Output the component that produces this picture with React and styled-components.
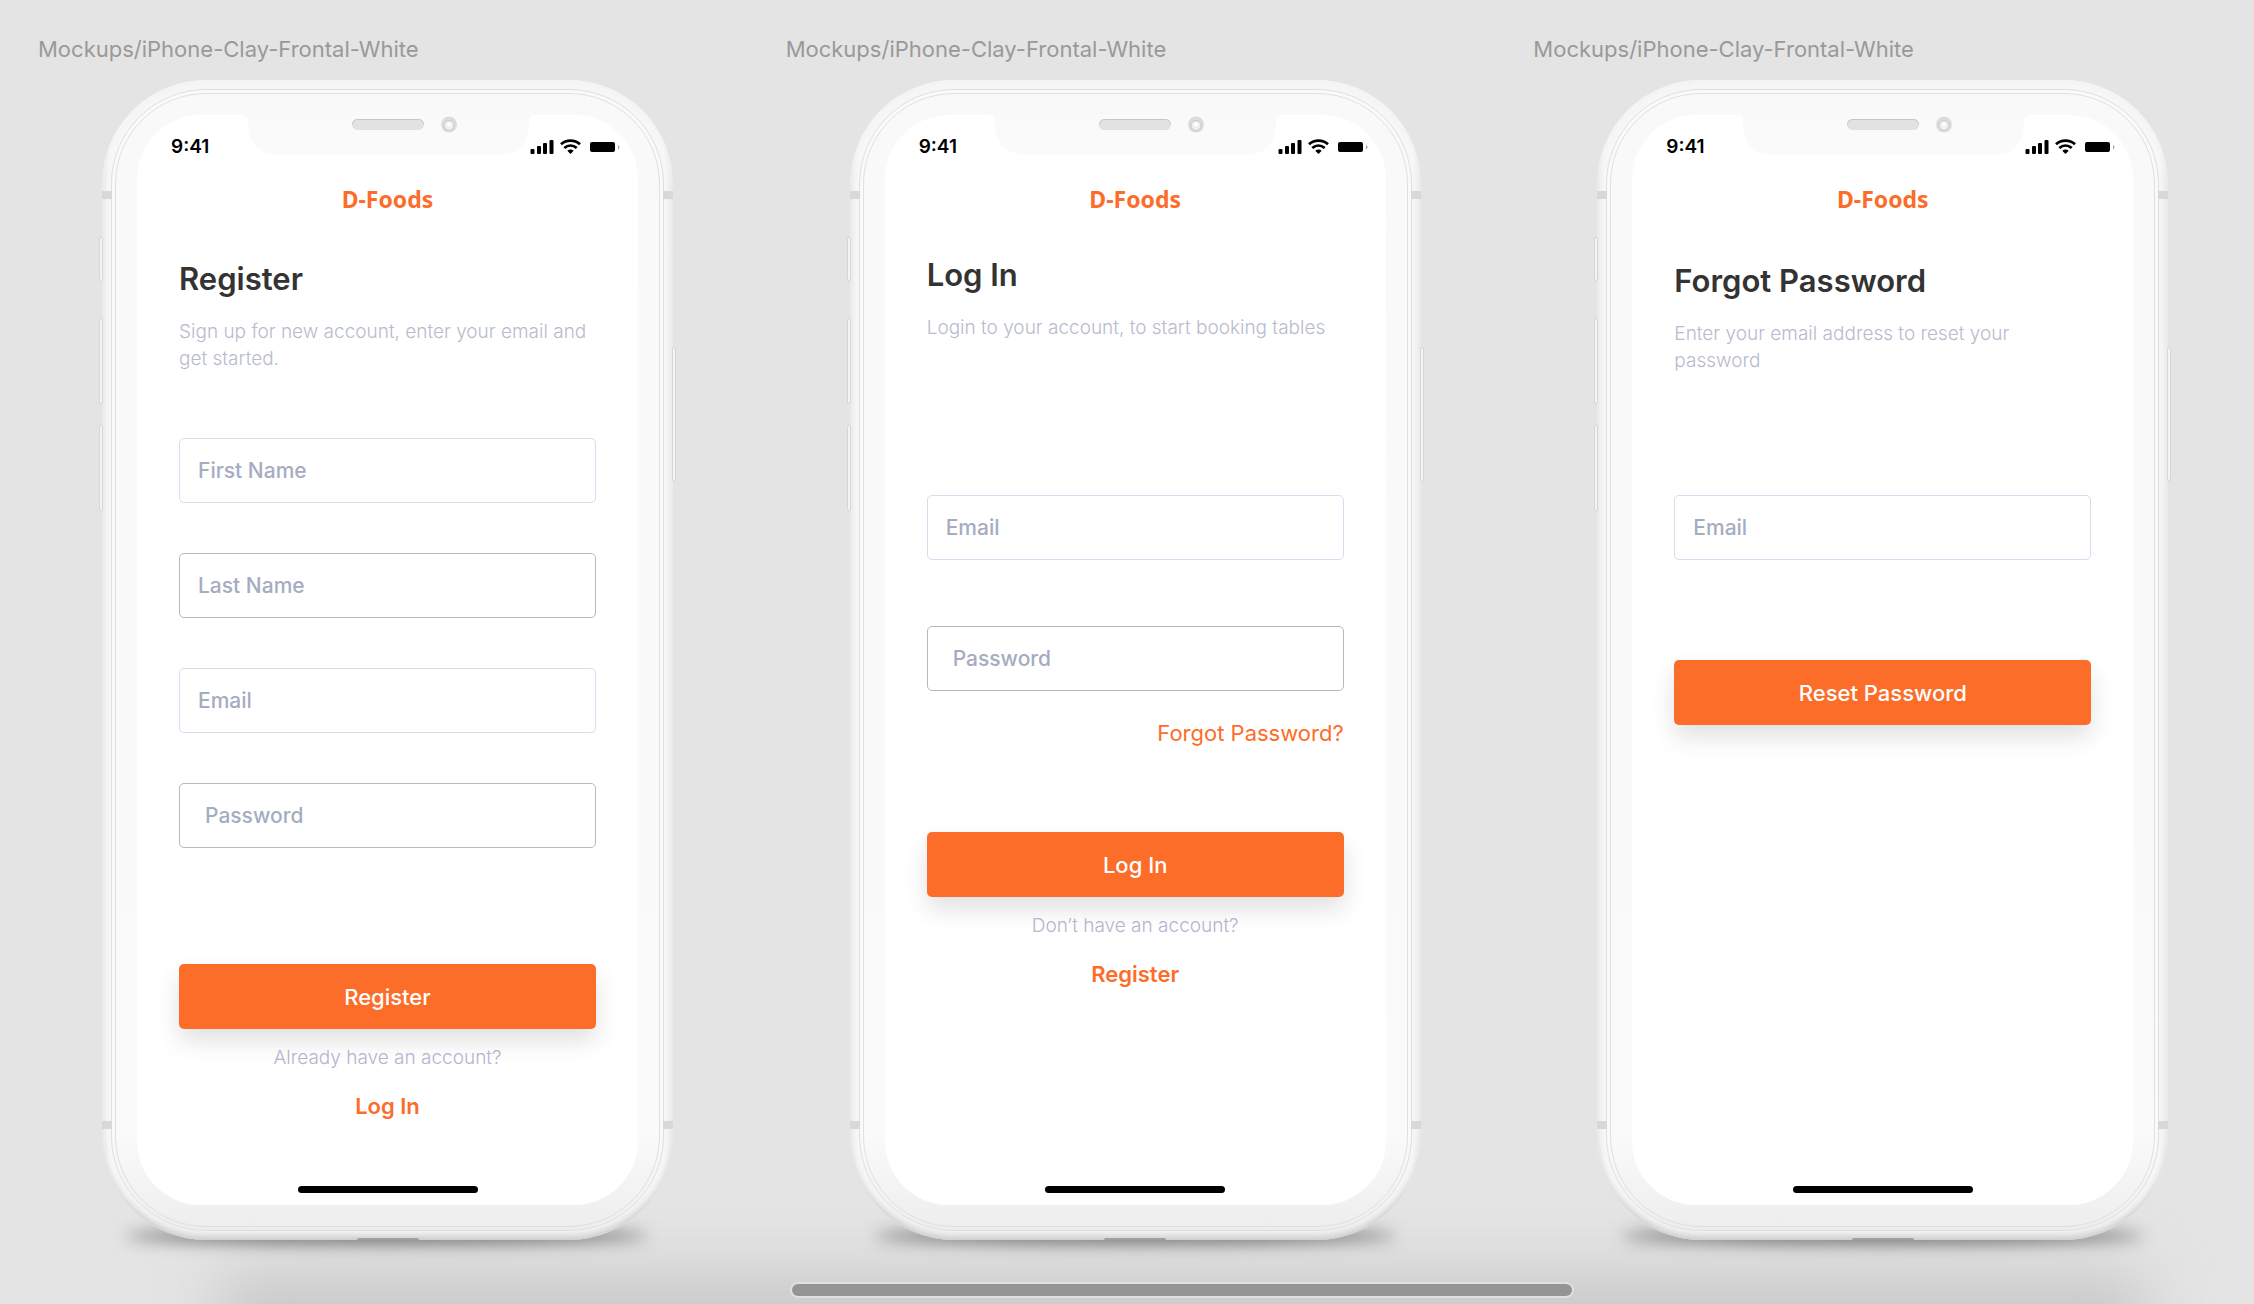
import React from 'react';
import styled, { createGlobalStyle } from 'styled-components';

const GlobalStyle = createGlobalStyle`
  :root {
    --color-orange: #fc6d2a;
    --color-canvas: #e4e4e4;
    --color-heading: #333333;
    --color-muted: #b8bbcc;
    --color-placeholder: #a6acc0;
  }

  * {
    box-sizing: border-box;
    margin: 0;
    padding: 0;
  }

  body {
    background-color: var(--color-canvas);
    font-family: Inter, 'Liberation Sans', sans-serif;
  }
`;

const Canvas = styled.main`
  position: relative;
  min-height: 100vh;
  padding: 34px 5px 0 6px;
  display: grid;
  grid-template-columns: repeat(3, 1fr);
  align-items: start;
  overflow: hidden;
`;

const FloorShadow = styled.div`
  position: absolute;
  left: 220px;
  right: 110px;
  bottom: -60px;
  height: 90px;
  background-color: #c8c8c8;
  filter: blur(30px);
`;

const Artboard = styled.section`
  position: relative;
  padding-left: 32px;
`;

const ArtboardName = styled.h2`
  font-size: 22px;
  line-height: 30px;
  font-weight: 400;
  color: #999999;
`;

const Phone = styled.div`
  position: relative;
  width: 100%;
  max-width: 571px;
  min-height: 1160px;
  margin: 16px 0 0 64px;
  padding: 9px;
  display: flex;
  border-radius: 104px;
  background: linear-gradient(to right, #ededed, #f7f7f7 8px, #f7f7f7 562px, #ededed);
  box-shadow: inset 0 -8px 8px -4px #c8c8c8, inset 0 4px 6px #f3f3f3;
`;

const ContactShadow = styled.div`
  position: absolute;
  left: 120px;
  bottom: -4px;
  width: 522px;
  height: 16px;
  border-radius: 50%;
  background-color: #6e6e6e;
  filter: blur(8px);
`;

const Rim = styled.div`
  flex: 1;
  padding: 3px;
  display: flex;
  border: 1px solid #dfdfdf;
  border-radius: 95px;
  background: linear-gradient(to bottom, #fafafa 92%, #ededed 100%);
`;

const Bezel = styled.div`
  flex: 1;
  padding: 21px;
  display: flex;
  border: 1px solid #e0e0e0;
  border-radius: 91px;
  background: linear-gradient(to bottom, #f9f9f9 0, #fafafa 92%, #eeeeee 100%);
`;

const Screen = styled.div`
  position: relative;
  flex: 1;
  padding-bottom: 12px;
  display: flex;
  flex-direction: column;
  border-radius: 64px;
  background-color: #ffffff;
`;

const Band = styled.span`
  position: absolute;
  ${({ $side }) => $side}: 0;
  ${({ $edge }) => $edge}: 111px;
  width: 10px;
  height: 8px;
  background-color: #d8d8d8;
`;

const SideButton = styled.span`
  position: absolute;
  ${({ $side }) => $side}: -3px;
  top: ${({ $top }) => $top}px;
  width: 4px;
  height: ${({ $height }) => $height}px;
  border: 1px solid #d6d6d6;
  border-radius: 3px;
  background-color: #f4f4f4;
`;

const Port = styled.span`
  position: absolute;
  left: 50%;
  bottom: 0;
  width: 62px;
  height: 2px;
  margin-left: -31px;
  border-radius: 31px 31px 0 0;
  background-color: #a0a0a0;
`;

const NotchSvg = styled.svg`
  position: absolute;
  top: 0;
  left: 50%;
  margin-left: -146px;
`;

const StatusBar = styled.div`
  padding: 21px 18px 0 34px;
  display: flex;
  justify-content: space-between;
  align-items: center;
`;

const Time = styled.time`
  font-size: 19px;
  line-height: 22px;
  font-weight: 600;
  color: #000000;
`;

const Body = styled.div`
  padding: 26px 42px 0;
  display: flex;
  flex-direction: column;
`;

const Brand = styled.p`
  font-family: 'Noto Sans', sans-serif;
  font-size: 23px;
  line-height: 30px;
  font-weight: 700;
  text-align: center;
  color: var(--color-orange);
`;

const Heading = styled.h1`
  margin-top: ${({ $top }) => $top}px;
  font-size: 31px;
  line-height: 40px;
  font-weight: 600;
  color: var(--color-heading);
`;

const Lead = styled.p`
  margin-top: 19px;
  font-size: 19px;
  line-height: 27px;
  font-weight: 300;
  color: var(--color-muted);
`;

const Form = styled.form`
  margin-top: ${({ $top }) => $top}px;
  display: flex;
  flex-direction: column;
`;

const Fields = styled.div`
  display: flex;
  flex-direction: column;
  gap: ${({ $gap }) => $gap}px;
`;

const Input = styled.input`
  width: 100%;
  height: 65px;
  padding: 0 ${({ $inset }) => ($inset ? 25 : 18)}px;
  border: 1px solid ${({ $outlined }) => ($outlined ? '#b8b8b8' : '#dcdaee')};
  border-radius: 5px;
  background-color: #ffffff;
  font-family: inherit;
  font-size: 21px;
  font-weight: 500;
  color: var(--color-heading);
  outline: none;

  &::placeholder {
    color: var(--color-placeholder);
    opacity: 1;
  }

  &:focus {
    border-color: var(--color-orange);
  }
`;

const ForgotLink = styled.a`
  align-self: flex-end;
  margin-top: 28px;
  font-size: 22px;
  line-height: 28px;
  font-weight: 400;
  color: var(--color-orange);
  text-decoration: none;
`;

const Submit = styled.button`
  height: 65px;
  margin-top: ${({ $top }) => $top}px;
  border: none;
  border-radius: 5px;
  background-color: var(--color-orange);
  box-shadow: 0 12px 24px rgba(0, 0, 0, 0.12);
  font-family: inherit;
  font-size: 22px;
  font-weight: 500;
  color: #ffffff;
  cursor: pointer;
`;

const Prompt = styled.p`
  position: relative;
  margin-top: 15px;
  font-size: 19px;
  line-height: 27px;
  font-weight: 300;
  text-align: center;
  color: #b5b4cd;
`;

const SwitchLink = styled.a`
  align-self: center;
  margin-top: 21px;
  font-size: 22px;
  line-height: 28px;
  font-weight: 600;
  color: var(--color-orange);
  text-decoration: none;
`;

const HomeIndicator = styled.div`
  align-self: center;
  width: 180px;
  height: 7px;
  margin-top: auto;
  border-radius: 4px;
  background-color: #000000;
`;

const ScrollThumb = styled.div`
  position: absolute;
  left: 35%;
  right: 30%;
  bottom: 8px;
  height: 12px;
  margin: 0 6px 0 3px;
  border-radius: 6px;
  background-color: #949494;
  box-shadow: 0 0 0 2px #e0e0e0;
`;

const Notch = () => (
  <NotchSvg width="293" height="40" viewBox="0 0 293 40" aria-hidden="true">
    <path
      d="M0 0C4 0 6 2 6 7C6 28 16 39 34 39H259C277 39 287 28 287 7C287 2 289 0 293 0Z"
      fill="#fafafa"
    />
    <rect x="110" y="4" width="72" height="11" rx="5.500" fill="#e2e2e2" />
    <path d="M110.500 9.500C110.500 6.500 112.500 4.500 115.500 4.500H176.500C179.500 4.500 181.500 6.500 181.500 9.500" fill="none" stroke="#c6c6c6" />
    <circle cx="207" cy="9.500" r="8" fill="#dcdcdc" />
    <circle cx="207" cy="10.500" r="5" fill="#efefef" stroke="#c8c8c8" />
    <circle cx="207" cy="9.500" r="2" fill="#ffffff" />
  </NotchSvg>
);

const StatusIcons = () => (
  <svg width="90" height="16" viewBox="0 0 90 16" aria-hidden="true">
    <rect x="0.500" y="10" width="4" height="5" rx="1" />
    <rect x="7" y="7" width="4" height="8" rx="1" />
    <rect x="13" y="4" width="4" height="11" rx="1" />
    <rect x="19.500" y="1" width="4" height="14" rx="1" />
    <g fill="none" stroke="#000" strokeWidth="2.800">
      <path d="M31 5.300C36.500 0.500 44.500 0.500 50 5.300" />
      <path d="M34.300 9C38 5.800 43 5.800 46.700 9" />
    </g>
    <path d="M37.300 11.800C39.200 10.200 41.800 10.200 43.700 11.800L40.500 15Z" />
    <rect x="60" y="3" width="25" height="10" rx="2" />
    <path d="M88 6C90 7 90 9.500 88 10.500Z" fill="#a0a0a0" />
  </svg>
);

const screens = [
  {
    id: 'register',
    title: 'Register',
    lead: 'Sign up for new account, enter your email and get started.',
    headingTop: 45,
    formTop: 66,
    fieldGap: 50,
    submitTop: 116,
    fields: [
      { label: 'First Name', type: 'text' },
      { label: 'Last Name', type: 'text', outlined: true },
      { label: 'Email', type: 'email' },
      { label: 'Password', type: 'password', outlined: true, inset: true },
    ],
    submit: 'Register',
    prompt: 'Already have an account?',
    link: 'Log In',
  },
  {
    id: 'login',
    title: 'Log In',
    lead: 'Login to your account, to start booking tables',
    headingTop: 41,
    formTop: 154,
    fieldGap: 66,
    submitTop: 85,
    fields: [
      { label: 'Email', type: 'email' },
      { label: 'Password', type: 'password', outlined: true, inset: true },
    ],
    forgot: 'Forgot Password?',
    submit: 'Log In',
    prompt: 'Don’t have an account?',
    link: 'Register',
  },
  {
    id: 'forgot',
    title: 'Forgot Password',
    lead: 'Enter your email address to reset your password',
    headingTop: 47,
    formTop: 121,
    fieldGap: 50,
    submitTop: 100,
    fields: [{ label: 'Email', type: 'email' }],
    submit: 'Reset Password',
  },
];

const PhoneMockup = ({ screen }) => (
  <Artboard>
    <ArtboardName>Mockups/iPhone-Clay-Frontal-White</ArtboardName>
    <ContactShadow />
    <Phone>
      <SideButton $side="left" $top={157} $height={44} />
      <SideButton $side="left" $top={238} $height={86} />
      <SideButton $side="left" $top={345} $height={86} />
      <SideButton $side="right" $top={267} $height={134} />
      <Band $side="left" $edge="top" />
      <Band $side="right" $edge="top" />
      <Band $side="left" $edge="bottom" />
      <Band $side="right" $edge="bottom" />
      <Port />
      <Rim>
        <Bezel>
          <Screen>
            <Notch />
            <StatusBar>
              <Time>9:41</Time>
              <StatusIcons />
            </StatusBar>
            <Body>
              <Brand>D-Foods</Brand>
              <Heading $top={screen.headingTop}>{screen.title}</Heading>
              <Lead>{screen.lead}</Lead>
              <Form $top={screen.formTop} onSubmit={(e) => e.preventDefault()}>
                <Fields $gap={screen.fieldGap}>
                  {screen.fields.map(({ label, type, outlined, inset }) => (
                    <Input
                      key={label}
                      type={type}
                      placeholder={label}
                      aria-label={label}
                      $outlined={outlined}
                      $inset={inset}
                    />
                  ))}
                </Fields>
                {screen.forgot && <ForgotLink href="#forgot">{screen.forgot}</ForgotLink>}
                <Submit type="submit" $top={screen.submitTop}>
                  {screen.submit}
                </Submit>
              </Form>
              {screen.prompt && <Prompt>{screen.prompt}</Prompt>}
              {screen.link && <SwitchLink href="#switch">{screen.link}</SwitchLink>}
            </Body>
            <HomeIndicator />
          </Screen>
        </Bezel>
      </Rim>
    </Phone>
  </Artboard>
);

function App() {
  return (
    <>
      <GlobalStyle />
      <Canvas>
        <FloorShadow />
        {screens.map((screen) => (
          <PhoneMockup key={screen.id} screen={screen} />
        ))}
        <ScrollThumb />
      </Canvas>
    </>
  );
}

export default App;
